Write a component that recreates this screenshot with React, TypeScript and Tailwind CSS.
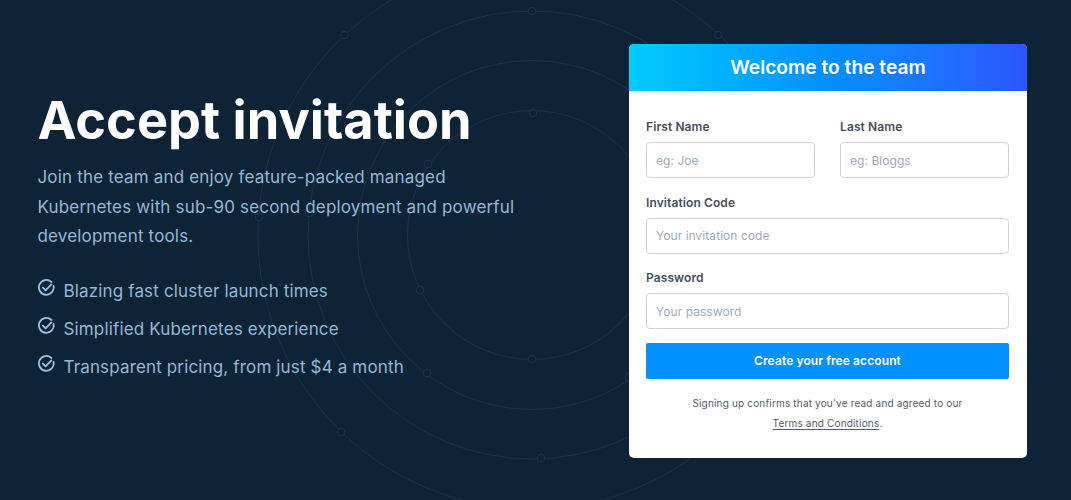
import React from 'react';

const rings = [124.5, 174.5, 224, 274];

const dots = [
  [532, 11], [344.5, 35], [718, 35], [533, 113], [428, 164], [259, 217], [309, 213],
  [420, 290], [532, 359], [427, 373], [341, 432], [541, 458], [629, 377],
];

const features = [
  'Blazing fast cluster launch times',
  'Simplified Kubernetes experience',
  'Transparent pricing, from just $4 a month',
];

const inputClass =
  'h-[36px] w-full rounded-[4px] border border-[#cdd2db] bg-white px-[9px] text-[12px] tracking-[0.05px] text-gray-900 placeholder:text-[#a0a9bb] focus:outline-none';

function Background() {
  return (
    <svg className="absolute inset-0" width="1071" height="500" viewBox="0 0 1071 500" fill="none" stroke="#1e3348" strokeWidth="1">
      {rings.map((r) => (
        <circle key={r} cx="532" cy="235" r={r} />
      ))}
      {dots.map(([x, y]) => (
        <circle key={`${x}-${y}`} cx={x} cy={y} r="3.7" fill="#0f2337" strokeWidth="1.2" />
      ))}
    </svg>
  );
}

function CheckIcon() {
  return (
    <svg className="mt-[-6px] h-[17px] w-[17px] shrink-0" viewBox="0 0 17 17" fill="none" stroke="#9cc0e0" strokeWidth="1.8" strokeLinecap="round" strokeLinejoin="round">
      <path d="M15.6 7a7.4 7.4 0 1 1-2.2-4" />
      <path d="M13.4 5.4 7.6 11.4 4.9 8.7" />
    </svg>
  );
}

function Field({ label, placeholder, type = 'text' }: { label: string; placeholder: string; type?: string }) {
  return (
    <div className="flex-1">
      <label className="mb-[5px] block text-[12px] leading-[20px] font-semibold tracking-[0.1px] text-[#454e5f]">{label}</label>
      <input type={type} placeholder={placeholder} className={inputClass} />
    </div>
  );
}

export default function App() {
  return (
    <div className="relative h-[500px] w-[1071px] overflow-hidden bg-[#0f2337] font-['Inter',sans-serif]">
      <Background />
      <div className="relative flex items-start justify-between pt-[44px] pr-[44px] pl-[37.5px]">
        <div className="w-[490px] pt-[43px]">
          <h1 className="text-[52.3px] leading-[66px] font-bold text-white">Accept invitation</h1>
          <p className="mt-[10px] text-[17px] leading-[29.6px] tracking-[0.17px] text-[#96b7d6]">
            Join the team and enjoy feature-packed managed Kubernetes with sub-90 second deployment and powerful development tools.
          </p>
          <ul className="mt-[25px] flex flex-col gap-[10px]">
            {features.map((item) => (
              <li key={item} className="flex items-center gap-[9px] text-[17px] leading-[28px] tracking-[0.15px] text-[#96b7d6]">
                <CheckIcon />
                {item}
              </li>
            ))}
          </ul>
        </div>
        <div className="h-[414px] w-[398px] overflow-hidden rounded-[5px] bg-white">
          <div className="flex h-[46.5px] items-center justify-center bg-gradient-to-r from-[#00ccff] via-[#0090ff] to-[#2a55ff] text-[19.2px] font-semibold text-white">
            Welcome to the team
          </div>
          <form className="flex flex-col gap-[14.5px] pt-[26.5px] pr-[18px] pl-[17px]">
            <div className="flex gap-[25px]">
              <Field label="First Name" placeholder="eg: Joe" />
              <Field label="Last Name" placeholder="eg: Bloggs" />
            </div>
            <Field label="Invitation Code" placeholder="Your invitation code" />
            <Field label="Password" placeholder="Your password" type="password" />
            <button type="button" className="mt-[-0.5px] h-[36px] rounded-[2px] bg-[#0090ff] text-[12px] font-semibold tracking-[0.1px] text-white">
              Create your free account
            </button>
            <p className="mt-[-1px] text-center text-[10px] leading-[20px] tracking-[0.17px] text-[#535c6b]">
              Signing up confirms that you've read and agreed to our
              <br />
              <a className="underline underline-offset-2">Terms and Conditions</a>.
            </p>
          </form>
        </div>
      </div>
    </div>
  );
}
